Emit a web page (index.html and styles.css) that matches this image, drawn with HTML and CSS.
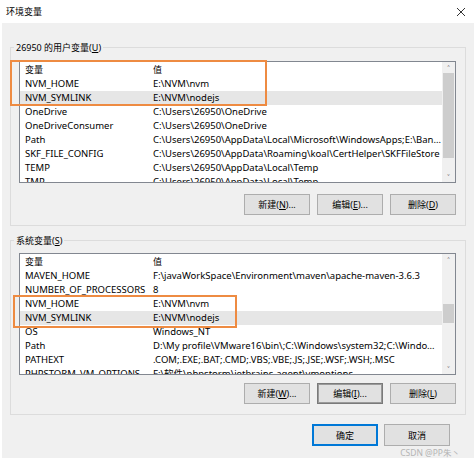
FILE: index.html
```html
<html lang="zh-CN"><head>
    <meta charset="UTF-8">
    <meta name="viewport" content="width=device-width, initial-scale=1.0">
    <title>环境变量</title>
    <link rel="stylesheet" href="styles.css">
</head>
<body>
    <div class="window">
        <div class="titlebar">
            <span class="title">环境变量</span>
            <svg class="close" width="10" height="10" viewBox="0 0 10 10">
                <path d="M1 1 L9 9 M9 1 L1 9" stroke="#333" stroke-width="1" fill="none"/>
            </svg>
        </div>

        <div class="dialog">
            <fieldset class="group">
                <legend>26950 的用户变量(<u>U</u>)</legend>
                <div class="listbox">
                    <div class="rows">
                        <div class="row head"><span>变量</span><span>值</span></div>
                        <div class="row"><span>NVM_HOME</span><span>E:\NVM\nvm</span></div>
                        <div class="row selected"><span>NVM_SYMLINK</span><span>E:\NVM\nodejs</span></div>
                        <div class="row"><span>OneDrive</span><span>C:\Users\26950\OneDrive</span></div>
                        <div class="row"><span>OneDriveConsumer</span><span>C:\Users\26950\OneDrive</span></div>
                        <div class="row"><span>Path</span><span>C:\Users\26950\AppData\Local\Microsoft\WindowsApps;E:\Bandizip\;C:\Users</span></div>
                        <div class="row"><span>SKF_FILE_CONFIG</span><span>C:\Users\26950\AppData\Roaming\koal\CertHelper\SKFFileStore</span></div>
                        <div class="row"><span>TEMP</span><span>C:\Users\26950\AppData\Local\Temp</span></div>
                        <div class="row"><span>TMP</span><span>C:\Users\26950\AppData\Local\Temp</span></div>
                    </div>
                    <div class="scrollbar">
                        <div class="arrow">&#x2C4;</div>
                        <div class="track"><div class="thumb thumb-user"></div></div>
                        <div class="arrow">&#x2C5;</div>
                    </div>
                </div>
                <div class="actions">
                    <button type="button">新建(<u>N</u>)...</button>
                    <button type="button">编辑(<u>E</u>)...</button>
                    <button type="button">删除(<u>D</u>)</button>
                </div>
            </fieldset>

            <fieldset class="group system">
                <legend>系统变量(<u>S</u>)</legend>
                <div class="listbox">
                    <div class="rows">
                        <div class="row head"><span>变量</span><span>值</span></div>
                        <div class="row"><span>MAVEN_HOME</span><span>F:\javaWorkSpace\Environment\maven\apache-maven-3.6.3</span></div>
                        <div class="row"><span>NUMBER_OF_PROCESSORS</span><span>8</span></div>
                        <div class="row"><span>NVM_HOME</span><span>E:\NVM\nvm</span></div>
                        <div class="row selected"><span>NVM_SYMLINK</span><span>E:\NVM\nodejs</span></div>
                        <div class="row"><span>OS</span><span>Windows_NT</span></div>
                        <div class="row"><span>Path</span><span>D:\My profile\VMware16\bin\;C:\Windows\system32;C:\Windows;C:\Windows</span></div>
                        <div class="row"><span>PATHEXT</span><span>.COM;.EXE;.BAT;.CMD;.VBS;.VBE;.JS;.JSE;.WSF;.WSH;.MSC</span></div>
                        <div class="row"><span>PHPSTORM_VM_OPTIONS</span><span>F:\软件\phpstorm\jetbrains-agent\vmoptions</span></div>
                    </div>
                    <div class="scrollbar">
                        <div class="arrow">&#x2C4;</div>
                        <div class="track"><div class="thumb thumb-system"></div></div>
                        <div class="arrow">&#x2C5;</div>
                    </div>
                </div>
                <div class="actions">
                    <button type="button">新建(<u>W</u>)...</button>
                    <button type="button" class="focused">编辑(<u>I</u>)...</button>
                    <button type="button">删除(<u>L</u>)</button>
                </div>
            </fieldset>

            <div class="footer">
                <button type="button" class="primary">确定</button>
                <button type="button">取消</button>
            </div>
        </div>

        <!-- highlight boxes drawn over the screenshot -->
        <div class="mark mark-user"></div>
        <div class="mark mark-system"></div>
        <div class="watermark">CSDN @PP朱丶</div>
    </div>
</body></html>
```

FILE: styles.css
```css
body {
    margin: 0;
    background-color: white;
    font-family: "Noto Sans", "Noto Sans CJK SC", sans-serif;
    font-size: 9.5px;
    color: #000;
}
.window {
    position: relative;
    width: 474px;
    height: 463px;
    overflow: hidden;
}
.titlebar {
    height: 23px;
    display: flex;
    align-items: center;
    justify-content: space-between;
    padding: 0 8px 0 6px;
    background-color: white;
}
.title {
    font-size: 9px;
}
.dialog {
    margin-left: 2px;
    height: 435px;
    padding: 18px 0 0 8px;
    box-sizing: border-box;
    background-color: #f0f0f0;
}
.group {
    width: 456px;
    margin: 0;
    padding: 7px 9px 10px 8px;
    border: 1px solid #dcdcdc;
    box-sizing: border-box;
}
.group legend {
    margin-left: -5px;
    padding: 0 2px;
    line-height: 13px;
    font-size: 9px;
}
.system {
    margin-top: 8px;
    padding-top: 6px;
}
.listbox {
    display: flex;
    height: 122px;
    border: 1px solid #828790;
    background-color: white;
    box-sizing: border-box;
}
.rows {
    flex: 1;
    min-width: 0;
    padding-top: 1px;
    overflow: hidden;
}
.row {
    display: grid;
    grid-template-columns: 128px 1fr;
    height: 14px;
    line-height: 14px;
}
.row span {
    padding-left: 5px;
    white-space: nowrap;
    overflow: hidden;
    text-overflow: ellipsis;
}
.row.head span {
    font-size: 9px;
}
.row.selected {
    background-color: #e6e6e6;
}
.scrollbar {
    width: 13px;
    display: flex;
    flex-direction: column;
    background-color: #f0f0f0;
}
.arrow {
    height: 11px;
    line-height: 13px;
    text-align: center;
    font-size: 9px;
    color: #606060;
}
.track {
    flex: 1;
}
.thumb {
    margin: 0 1px;
    background-color: #cdcdcd;
}
.thumb-user {
    height: 85px;
}
.thumb-system {
    margin-top: 39px;
    height: 19px;
}
.actions {
    display: flex;
    justify-content: flex-end;
    gap: 7px;
    margin-top: 11px;
}
button {
    width: 66px;
    height: 21px;
    padding: 0;
    background-color: #e1e1e1;
    border: 1px solid #adadad;
    font-family: "Noto Sans", "Noto Sans CJK SC", sans-serif;
    font-size: 9px;
    color: #000;
    box-sizing: border-box;
}
.system .actions {
    margin-top: 8px;
}
.focused {
    border-color: #7a7a7a;
    box-shadow: inset 0 0 0 1px #9a9a9a;
}
.footer {
    display: flex;
    justify-content: flex-end;
    gap: 6px;
    width: 456px;
    padding-right: 16px;
    margin-top: 9px;
    box-sizing: border-box;
}
.footer button {
    height: 22px;
}
.primary {
    border-color: #0078d7;
    box-shadow: inset 0 0 0 1px #0078d7;
}
.mark {
    position: absolute;
    border: 2px solid #ee8b42;
    box-sizing: border-box;
}
.mark-user {
    left: 10px;
    top: 60px;
    width: 257px;
    height: 46px;
}
.mark-system {
    left: 13px;
    top: 295px;
    width: 224px;
    height: 33px;
}
.watermark {
    position: absolute;
    right: 14px;
    bottom: 5px;
    font-size: 8.5px;
    color: #b4b4b4;
}
```
